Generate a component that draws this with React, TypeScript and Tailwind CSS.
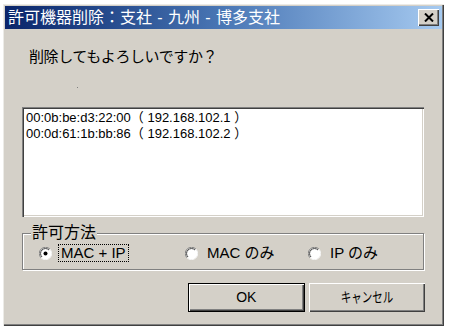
const font = "font-['Liberation_Sans','Noto_Sans_CJK_JP',sans-serif]";
const raised =
  "shadow-[inset_1px_1px_0_#fff,inset_-1px_-1px_0_#404040,inset_-2px_-2px_0_#808080]";

const Radio = ({ checked }: { checked?: boolean }) => (
  <svg width="13" height="13" viewBox="0 0 13 13" className="shrink-0">
    <circle cx="6.5" cy="6.5" r="6" fill="#fff" />
    <path d="M11 2.2 A6 6 0 0 0 2 10.8" fill="none" stroke="#808080" strokeWidth="1" />
    <path d="M10 3 A4.9 4.9 0 0 0 3 10" fill="none" stroke="#404040" strokeWidth="1" />
    <path d="M2 10.8 A6 6 0 0 0 11 2.2" fill="none" stroke="#f4f4f4" strokeWidth="1" />
    {checked && <circle cx="6.5" cy="6.5" r="2" fill="#000" />}
  </svg>
);

const Button = ({ children, def }: { children: React.ReactNode; def?: boolean }) => (
  <button
    className={`w-[118px] h-[29px] bg-[#d4d0c8] flex items-center justify-center text-[14px] text-black ${font} ${raised} ${
      def ? "border border-black" : ""
    }`}
  >
    {children}
  </button>
);

// short hyphen in a full-width cell, as the title bar font draws it
const Dash = () => <span className="inline-block w-[16px] text-center">-</span>;

export default function App() {
  return (
    <div className="w-[449px] h-[333px] bg-white pt-[4px] pl-[3px]">
      <div
        className={`w-[441px] h-[322px] bg-[#d4d0c8] flex flex-col p-[2px] shadow-[inset_1px_1px_0_#ecebe7,inset_-1px_-1px_0_#404040,inset_-2px_-2px_0_#808080]`}
      >
        {/* Title bar */}
        <div className="h-[23px] flex items-center justify-between bg-gradient-to-r from-[#0a246a] via-[#4a77b5] to-[#a6caf0] pl-[3px] pr-[3px]">
          <span className={`text-white text-[16px] leading-none ${font}`}>
            許可機器削除：支社<Dash />九州<Dash />博多支社
          </span>
          <span className={`w-[21px] h-[17px] bg-[#d4d0c8] flex items-center justify-center ${raised}`}>
            <svg width="10" height="9" viewBox="0 0 10 9">
              <path d="M1 0.5 L9 8.5 M9 0.5 L1 8.5" stroke="#000" strokeWidth="2" />
            </svg>
          </span>
        </div>

        <div className="flex flex-col px-[17px]">
          <p className={`mt-[20px] ml-[7px] text-[15px] leading-[16px] tracking-[-0.4px] text-black ${font}`}>
            削除してもよろしいですか？
          </p>
          <span className="ml-[55px] mt-[22px] w-[1px] h-[1px] bg-[#808080]" />

          {/* List */}
          <div className="mt-[19px] w-[402px] h-[110px] bg-white shadow-[inset_1px_1px_0_#808080,inset_2px_2px_0_#404040,inset_-1px_-1px_0_#fff,inset_-2px_-2px_0_#d4d0c8] pl-[4px] pt-[3px]">
            <div className={`text-[13px] leading-[16px] text-black ${font}`}>
              <div>00:0b:be:d3:22:00（ 192.168.102.1 ）</div>
              <div>00:0d:61:1b:bb:86（ 192.168.102.2 ）</div>
            </div>
          </div>

          {/* Group */}
          <div className="relative mt-[16px] w-[402px] h-[37px] border border-[#808080] shadow-[1px_1px_0_#fff,inset_1px_1px_0_#fff]">
            <span className={`absolute -top-[9px] left-[8px] px-[1px] bg-[#d4d0c8] text-[16px] leading-none text-black ${font}`}>
              許可方法
            </span>
            <div className={`flex items-center h-full pt-[3px] pl-[16px] text-[15px] text-black ${font}`}>
              <div className="flex items-center w-[146px] gap-[6px]">
                <Radio checked />
                <span className="border border-dotted border-black px-[2px] leading-[16px]">MAC + IP</span>
              </div>
              <div className="flex items-center w-[123px] gap-[9px]">
                <Radio />
                <span>MAC のみ</span>
              </div>
              <div className="flex items-center gap-[9px]">
                <Radio />
                <span>IP のみ</span>
              </div>
            </div>
          </div>

          {/* Buttons */}
          <div className="flex gap-[4px] mt-[13px] ml-[166px]">
            <Button def>OK</Button>
            <Button>
              <span className="inline-block scale-x-75 text-[14px]">キャンセル</span>
            </Button>
          </div>
        </div>
      </div>
    </div>
  );
}
